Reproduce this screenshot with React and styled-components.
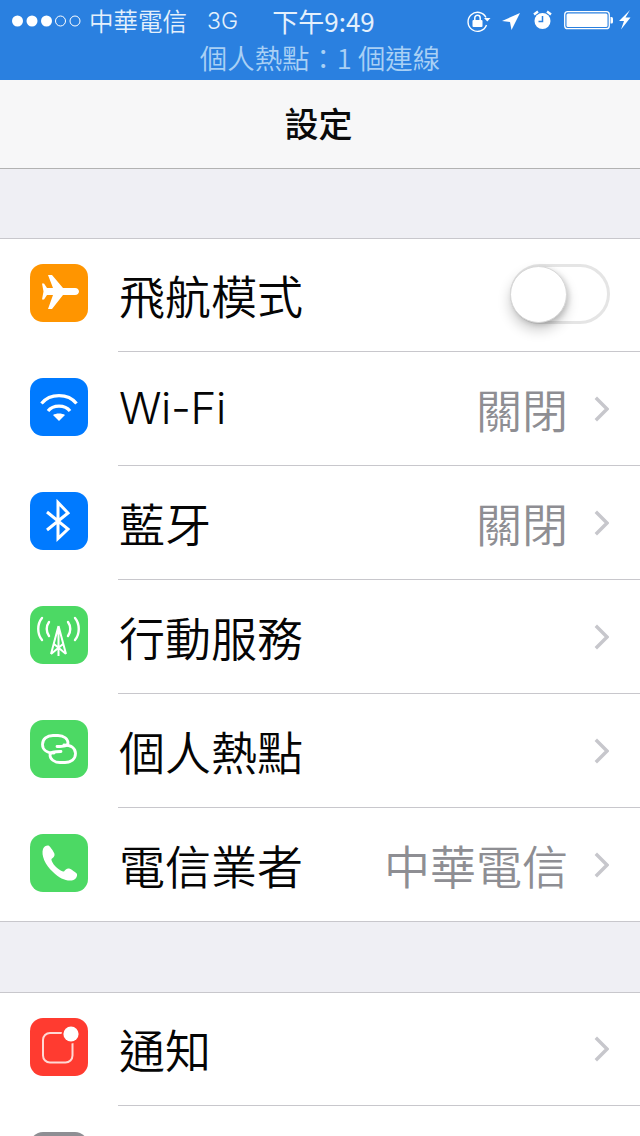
import React from "react";
import styled, { createGlobalStyle } from "styled-components";

const CJK = '"Noto Sans CJK TC", sans-serif';
const Global = createGlobalStyle`
  html, body { margin: 0; padding: 0; background: #efeff4; }
  body { font-family: "Inter", "Noto Sans CJK TC", sans-serif; overflow: hidden; }
`;
const Screen = styled.div`
  width: 640px; height: 1136px; overflow: hidden; background: #efeff4;
`;
const StatusArea = styled.header`
  height: 80px; background: #2a80e0; color: #fff;
  display: flex; flex-direction: column; box-sizing: border-box; padding-top: 4px;
`;
const StatusLine = styled.div`
  height: 34px; display: grid; grid-template-columns: 1fr auto 1fr; align-items: center;
  padding: 0 6px 0 12px; color: #e4f0fc;
`;
const StatusLeft = styled.div`
  display: flex; align-items: center; gap: 7px; white-space: nowrap;
`;
const Carrier = styled.span`
  font-family: ${CJK}; font-size: 24.500px; line-height: 32px; font-weight: 350;
`;
const Net = styled.span`
  font-family: "Inter", sans-serif; font-size: 23px; margin-left: 13px; font-weight: 350;
`;
const Time = styled.div`
  font-family: ${CJK}; font-size: 26px; font-weight: 400; margin-left: 1px; white-space: nowrap; line-height: 32px;
`;
const StatusRight = styled.div`
  display: flex; justify-content: flex-end; align-items: center;
`;
const Tether = styled.div`
  text-align: center; font-family: ${CJK}; font-weight: 350;
  font-size: 27.400px; line-height: 36px; color: #a9d0f5; margin-top: 1px; white-space: nowrap;
`;
const NavBar = styled.nav`
  height: 88px; background: #f7f7f8; border-bottom: 1px solid #b2b2b2;
  display: flex; align-items: center; justify-content: center;
`;
const Title = styled.h1`
  margin: 0 3px 4px 0; font-family: ${CJK}; font-size: 34px; font-weight: 500; color: #0a0a0a;
`;
const Group = styled.section`
  margin-top: ${(p) => p.$gap}px; background: #fff;
  border-top: 1px solid #c8c7cc; border-bottom: 1px solid #c8c7cc;
`;
const Tile = styled.div`
  width: 58px; height: 58px; flex: none; border-radius: 13px; background: ${(p) => p.$bg};
  margin-bottom: 2px;
  svg { display: block; }
`;
const RowBody = styled.div`
  flex: 1; align-self: stretch; margin-left: 30px; display: flex; align-items: center; padding-right: 31px;
`;
const RowWrap = styled.div`
  height: 114px; box-sizing: border-box; display: flex; align-items: center; padding-left: 30px;
  &:first-child { height: 112px; }
  &:first-child ${Tile} { margin-bottom: 4px; }
  & + & ${RowBody} { border-top: 1px solid #c8c7cc; }
`;
const Label = styled.span`
  flex: 1; white-space: nowrap; line-height: 60px; color: #050505; margin: 0 0 2px 1px;
  font-family: ${(p) => (p.$latin ? '"Inter", sans-serif' : CJK)};
  font-size: ${(p) => (p.$latin ? 44 : 46)}px;
  font-weight: 350;
  letter-spacing: ${(p) => (p.$latin ? "-0.400px" : "0")};
`;
const Value = styled.span`
  font-family: ${CJK}; font-size: 46px; color: #8e8e93; font-weight: 350;
  line-height: 60px; margin: 0 26px 2px 0; white-space: nowrap;
`;
const Switch = styled.div`
  width: 100px; height: 60px; box-sizing: border-box; border: 3px solid #e5e5e5; border-radius: 30px;
  position: relative; background: #fff; margin: 0 -1px 2px 0;
`;
const Knob = styled.div`
  position: absolute; left: -3px; top: -1px; width: 57px; height: 57px; border-radius: 50%;
  background: #fff; border: 1px solid #d8d8d8; box-sizing: border-box;
  box-shadow: 0 7px 13px rgba(0,0,0,0.2), 2px 2px 5px rgba(0,0,0,0.14);
`;
const Divider = styled.div`
  height: 1px; background: #c8c7cc; margin-left: 118px;
`;
const Peek = styled.div`
  height: 30px; padding: 26px 0 0 30px; box-sizing: content-box;
`;
const PeekTile = styled.div`
  width: 58px; height: 30px; border-radius: 13px 13px 0 0; background: #8e8e93;
`;

const Chevron = () => (
  <svg width="15" height="26" viewBox="0 0 15 26" fill="none">
    <path d="M1.800 1.800 L13 13 L1.800 24.200" stroke="#c7c7cc" strokeWidth="3.400" />
  </svg>
);
const Dots = () => (
  <svg width="70" height="16" viewBox="0 0 70 16">
    {[5.500, 20, 34.500].map((x) => <circle key={x} cx={x} cy="8" r="5.500" fill="#fff" />)}
    {[48.500, 63].map((x) => <circle key={x} cx={x} cy="8" r="5" fill="none" stroke="#fff" strokeWidth="1" />)}
  </svg>
);
const StatusIcons = () => (
  <svg width="174" height="28" viewBox="460 7 174 28" fill="none">
    <path d="M486 17.500 A9.500 9.500 0 1 0 486.500 25" stroke="#fff" strokeWidth="1.400" />
    <path d="M484 18 h6.500 l-3.200 3.500z" fill="#fff" />
    <rect x="472.500" y="20" width="10" height="7" rx="1" fill="#fff" />
    <path d="M474.800 20 V18 a2.700 2.700 0 0 1 5.400 0 V20" stroke="#fff" strokeWidth="1.500" />
    <path d="M502 21 L520 13 L511.500 30 L510 22z" fill="#fff" />
    <circle cx="542.500" cy="21" r="8" fill="#fff" />
    <path d="M542.500 16 v5.500 h-4" stroke="#2a80e0" strokeWidth="1.500" />
    <path d="M534 14.500 L538 11.500 M551 14.500 L547 11.500" stroke="#fff" strokeWidth="2.400" />
    <rect x="564.700" y="11.700" width="44.600" height="17" rx="3" stroke="#fff" strokeWidth="1.300" />
    <rect x="566.500" y="13.500" width="41" height="13.500" rx="1.500" fill="#fff" />
    <path d="M610.500 17 h1 a1.500 1.500 0 0 1 1.500 1.500 v3.500 a1.500 1.500 0 0 1 -1.500 1.500 h-1z" fill="#fff" />
    <path d="M630 10 L619 21 H624 L621 29.500 L630.500 17.500 H625.500z" fill="#fff" />
  </svg>
);
const Glyph = ({ children, ...rest }) => (
  <svg width="58" height="58" viewBox="0 0 58 58" fill="none" {...rest}>{children}</svg>
);
const Plane = () => (
  <Glyph>
    <path fill="#fff" d="M18 11 h4 L33 24 H45 c2.500 0 4 1.600 4 3.500 s-1.500 3.500 -4 3.500 H33 L22 45 h-4 L23 31 H17 L14 35.500 H12 L13.500 27.500 L12 19.500 H14 L17 24 H23z" />
  </Glyph>
);
const Wifi = () => (
  <Glyph>
    <path stroke="#fff" strokeWidth="3.200" d="M11.500 25.500 C20 15 38 15 46.500 25.500" />
    <path stroke="#fff" strokeWidth="3.200" d="M18 33 C23 26.500 35 26.500 40 33" />
    <path fill="#fff" d="M29 43 L23 37 C26 35 32 35 35 37z" />
  </Glyph>
);
const Bluetooth = () => (
  <Glyph>
    <path stroke="#fff" strokeWidth="3" d="M17 20 L38 37 L28 46.500 V10.500 L38 21 L17 38" />
  </Glyph>
);
const Antenna = () => (
  <Glyph stroke="#fff" strokeWidth="2">
    <path d="M28.500 20 L21 48 M28.500 20 L36 48 M28.500 21 V50 M21 48 L33 38 M36 48 L24 38" />
    <path strokeLinecap="round" strokeWidth="2.400" d="M12 12 C7 18 7 28 12 34 M19 16 C16 20 16 26 19 30 M45 12 C50 18 50 28 45 34 M38 16 C41 20 41 26 38 30" />
  </Glyph>
);
const Link = () => (
  <Glyph stroke="#fff" strokeWidth="2.800" strokeLinecap="round">
    <path d="M24 33 C16 33 12.500 29 12.500 24.500 C12.500 19 17 15.500 23 15.500 H28 C34 15.500 38 19 38 23 C38 26 34 26.500 27 26.500" />
    <path d="M34 25 C42 25 45.500 29 45.500 33.500 C45.500 39 41 42.500 35 42.500 H30 C24 42.500 20 39 20 35 C20 32 24 31.500 31 31.500" />
  </Glyph>
);
const Phone = () => (
  <Glyph>
    <path fill="#fff" d="M13 15 C14 12 17 11 18.500 11.500 C20 12 24 18 24.500 20 C25 22 23 24 21.500 25 C21 26 23 30 26 33 C29 36 33 38 34 37.500 C35 36 37 34 39 34.500 C41 35 46 38.500 47 40 C47.500 42 46 45 43.500 46 C38 48 30 45 23 38 C15 31 11 21 13 15z" />
  </Glyph>
);
const Notify = () => (
  <Glyph>
    <rect x="13" y="15" width="29.500" height="29.500" rx="7" stroke="#ffd9d5" strokeWidth="2" />
    <circle cx="41" cy="16" r="9.500" fill="#ff3b30" />
    <circle cx="41" cy="16" r="7.600" fill="#fff" />
  </Glyph>
);

const rows = [
  { bg: "#ff9500", icon: <Plane />, label: "飛航模式", toggle: true },
  { bg: "#007aff", icon: <Wifi />, label: "Wi-Fi", latin: true, value: "關閉" },
  { bg: "#007aff", icon: <Bluetooth />, label: "藍牙", value: "關閉" },
  { bg: "#4cd964", icon: <Antenna />, label: "行動服務" },
  { bg: "#4cd964", icon: <Link />, label: "個人熱點" },
  { bg: "#4cd964", icon: <Phone />, label: "電信業者", value: "中華電信" },
];

const SettingRow = ({ bg, icon, label, latin, value, toggle }) => (
  <RowWrap>
    <Tile $bg={bg}>{icon}</Tile>
    <RowBody>
      <Label $latin={latin}>{label}</Label>
      {value && <Value>{value}</Value>}
      {toggle ? <Switch><Knob /></Switch> : <Chevron />}
    </RowBody>
  </RowWrap>
);

export default function App() {
  return (
    <Screen>
      <Global />
      <StatusArea>
        <StatusLine>
          <StatusLeft>
            <Dots />
            <Carrier>中華電信</Carrier>
            <Net>3G</Net>
          </StatusLeft>
          <Time>下午9:49</Time>
          <StatusRight><StatusIcons /></StatusRight>
        </StatusLine>
        <Tether>個人熱點：1 個連線</Tether>
      </StatusArea>
      <NavBar><Title>設定</Title></NavBar>
      <Group $gap={69}>
        {rows.map((r) => <SettingRow key={r.label} {...r} />)}
      </Group>
      <Group $gap={70}>
        <SettingRow bg="#ff3b30" icon={<Notify />} label="通知" />
        <Divider />
        <Peek><PeekTile /></Peek>
      </Group>
    </Screen>
  );
}
